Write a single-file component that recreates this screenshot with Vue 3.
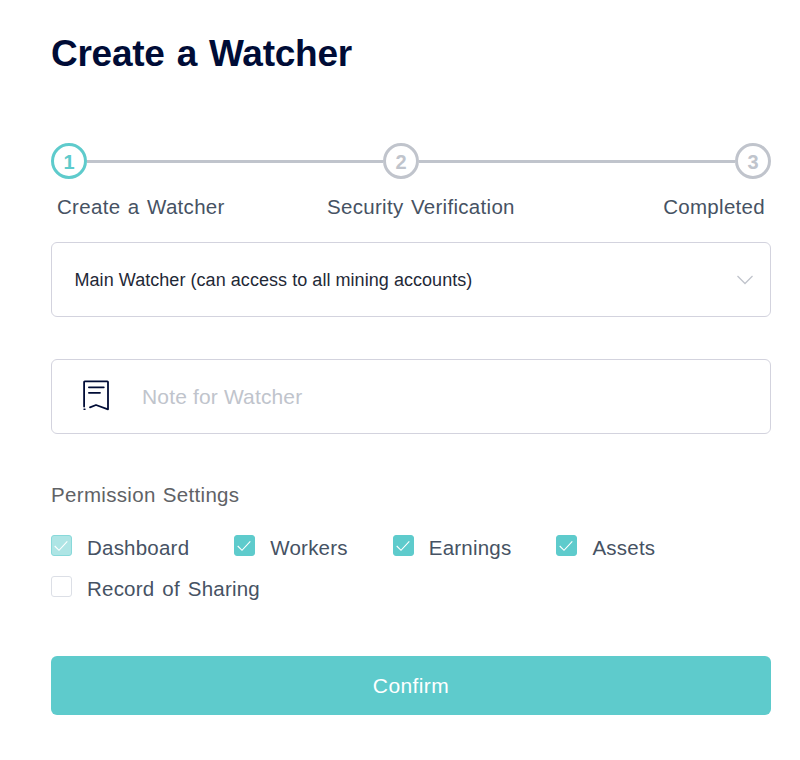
<script setup>
import { ref } from 'vue';

const steps = [
  { id: 1, label: 'Create a Watcher' },
  { id: 2, label: 'Security Verification' },
  { id: 3, label: 'Completed' }
];

const currentStep = ref(1);
const note = ref('');

const permissions = ref([
  { name: 'Dashboard', checked: true, disabled: true },
  { name: 'Workers', checked: true, disabled: false },
  { name: 'Earnings', checked: true, disabled: false },
  { name: 'Assets', checked: true, disabled: false },
  { name: 'Record of Sharing', checked: false, disabled: false }
]);

const toggle = (item) => {
  if (!item.disabled) {
    item.checked = !item.checked;
  }
};
</script>

<template>
  <main class="watcher">
    <h1>Create a Watcher</h1>

    <div class="steps">
      <template v-for="step in steps" :key="step.id">
        <span v-if="step.id > 1" class="line" :class="'line-' + step.id"></span>
        <span class="circle" :class="{ active: step.id === currentStep }">{{ step.id }}</span>
      </template>
    </div>
    <div class="step-labels">
      <span v-for="step in steps" :key="step.id">{{ step.label }}</span>
    </div>

    <div class="field select">
      <span>Main Watcher (can access to all mining accounts)</span>
      <svg class="arrow" width="18" height="12" viewBox="0 0 18 12">
        <path d="M1.5 2 L9 9.5 L16.5 2" fill="none" stroke="#c0c4cc" stroke-width="1.3" />
      </svg>
    </div>

    <div class="field note">
      <svg width="30" height="34" viewBox="0 0 30 34" fill="none" stroke="#000c36" stroke-width="1.8" stroke-linecap="round" stroke-linejoin="round">
        <path d="M3.1 27.5 V3.1 Q3.1 2.4 3.8 2.4 H26.3 Q27 2.4 27 3.1 V30.3 L15 26 L9 28.3" />
        <path d="M7.9 8.3 H22.8 M7.9 13.8 H19" />
        <path d="M3 30.2 H4" stroke-width="1.4" />
      </svg>
      <input v-model="note" type="text" placeholder="Note for Watcher" />
    </div>

    <h2>Permission Settings</h2>
    <div class="permissions">
      <div
        v-for="item in permissions"
        :key="item.name"
        class="permission"
        :class="{ checked: item.checked, disabled: item.disabled }"
        @click="toggle(item)"
      >
        <span class="box">
          <svg v-if="item.checked" width="19" height="19" viewBox="0 0 19 19">
            <path d="M2.7 10 L7 14.3 L15.3 5.3" fill="none" stroke="#fff" stroke-width="1.1" />
          </svg>
        </span>
        <span class="name">{{ item.name }}</span>
      </div>
    </div>

    <button class="confirm-button">Confirm</button>
  </main>
</template>

<style>
body {
  background-color: #fff;
}
</style>

<style scoped>
.watcher {
  box-sizing: border-box;
  width: 800px;
  height: 760px;
  padding: 30px 29px 0 51px;
  font-family: "Liberation Sans", Arial, sans-serif;
  font-size: 21px;
  letter-spacing: 0.15px;
  color: #465263;
  white-space: nowrap;
}

h1 {
  margin: 0 0 65px;
  font-size: 37px;
  line-height: 48px;
  letter-spacing: -0.25px;
  word-spacing: 2px;
  color: #000c36;
}

.steps {
  display: flex;
  align-items: center;
}

.circle {
  box-sizing: border-box;
  width: 36px;
  height: 36px;
  border: 3px solid #c0c4cc;
  border-radius: 50%;
  font-size: 20px;
  line-height: 32px;
  text-align: center;
  letter-spacing: 0;
  font-weight: bold;
  color: #c0c4cc;
}

.circle.active {
  border-color: #5ecbcc;
  color: #5ecbcc;
}

.line {
  height: 3px;
  background-color: #c0c4cc;
}

.line-2 {
  width: 296px;
}

.line-3 {
  width: 316px;
}

.step-labels {
  display: grid;
  grid-template-columns: 270px 1fr auto;
  padding: 0 6px;
  margin-top: 14px;
  font-size: 20.5px;
  line-height: 28px;
  letter-spacing: 0.3px;
  word-spacing: 1.5px;
}

.field {
  box-sizing: border-box;
  display: flex;
  align-items: center;
  height: 75px;
  border: 1px solid #d3d3de;
  border-radius: 6px;
}

.select {
  justify-content: space-between;
  margin-top: 21px;
  padding: 0 16px 0 22.5px;
  font-size: 18px;
  line-height: 22px;
  letter-spacing: 0.05px;
  color: #1f2937;
}

.note {
  margin-top: 42px;
  padding-left: 29px;
}

.note svg {
  margin-bottom: 1px;
}

.note input {
  width: 500px;
  margin-left: 31px;
  padding: 1px 0 0;
  border: none;
  outline: none;
  font: inherit;
  letter-spacing: inherit;
}

.note input::placeholder {
  color: #c0c4cc;
}

h2 {
  margin: 47px 0 0;
  font-size: 20.5px;
  font-weight: normal;
  line-height: 28px;
  letter-spacing: 0.33px;
  word-spacing: 1px;
  color: #606266;
}

.permissions {
  display: flex;
  flex-wrap: wrap;
  column-gap: 45px;
  margin-top: 18px;
}

.permission {
  display: flex;
  align-items: center;
  height: 41px;
  font-size: 20.5px;
  letter-spacing: 0.22px;
  word-spacing: 2px;
  cursor: pointer;
}

.box {
  box-sizing: border-box;
  width: 21px;
  height: 21px;
  margin-right: 15px;
  margin-bottom: 5px;
  border: 1px solid #dcdfe6;
  border-radius: 3px;
}

.box svg {
  display: block;
}

.checked .box {
  border-color: #5ecbcc;
  background-color: #5ecbcc;
}

.disabled {
  cursor: default;
}

.disabled .box {
  border-color: #88d9da;
  background-color: #aee5e5;
}

.confirm-button {
  width: 100%;
  height: 59px;
  margin-top: 47px;
  padding: 1px 0 0;
  border: none;
  border-radius: 6px;
  background-color: #5ecbcc;
  font: inherit;
  letter-spacing: 0.4px;
  color: #fff;
  cursor: pointer;
}
</style>
